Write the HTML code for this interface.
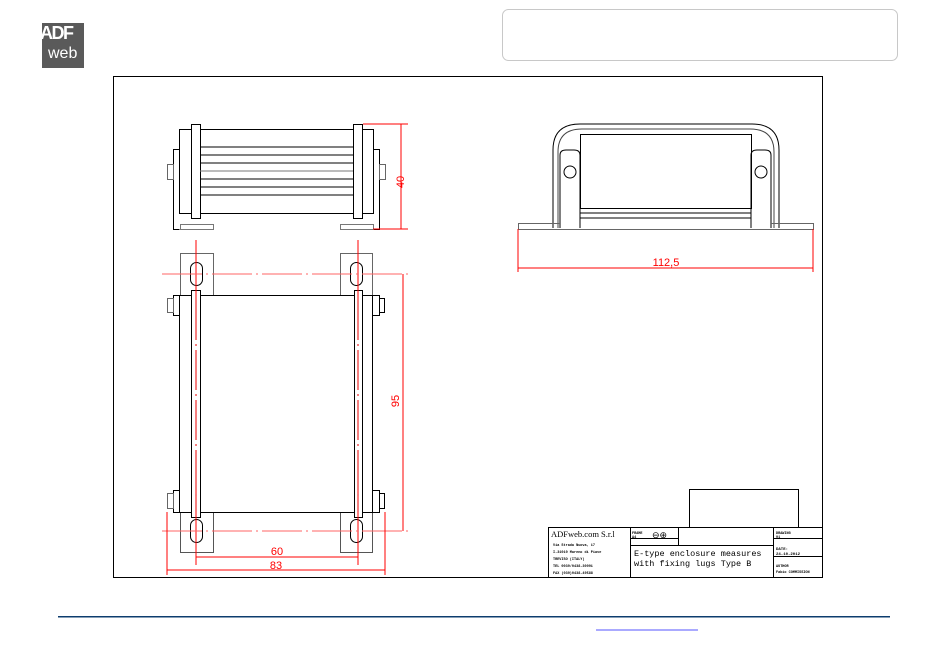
<!DOCTYPE html>
<html><head><meta charset="utf-8"><style>
html,body{margin:0;padding:0;background:#fff;width:950px;height:667px;overflow:hidden;font-family:"Liberation Sans",sans-serif}
</style></head><body>
<svg width="950" height="667" viewBox="0 0 950 667" xmlns="http://www.w3.org/2000/svg" style="position:absolute;left:0;top:0">
<!-- logo -->
<rect x="42" y="23" width="42" height="45" fill="#5a5a5a"/>
<text x="40" y="39" font-size="18" font-weight="700" fill="#fff" font-family="Liberation Sans" letter-spacing="-1.5">ADF</text>
<text x="48" y="58" font-size="16" fill="#fff" font-family="Liberation Sans">web</text>
<!-- header box -->
<rect x="502.5" y="9.5" width="395" height="51" rx="6" fill="#fff" stroke="#c8c8c8"/>
<!-- frame -->
<rect x="113.5" y="76.5" width="709" height="501" fill="none" stroke="#000"/>
<g fill="none" stroke="#000" stroke-width="1">
<rect x="179.5" y="129.5" width="194" height="84"/>
<rect x="191.5" y="124.5" width="9" height="94" fill="#fff"/>
<rect x="353.5" y="124.5" width="9" height="94" fill="#fff"/>
<path d="M200 147H353M200 155H353M200 163H353M200 179H353M200 187H353M200 195H353"/>
<path d="M200 171H353" stroke="#777"/>
<path d="M179.5 149.5H173.5V229.5H179.5M373.5 149.5H379.5V229.5H373.5"/>
<rect x="167.5" y="164.5" width="6" height="15" stroke="#666"/>
<rect x="379.5" y="164.5" width="6" height="15" stroke="#666"/>
<rect x="180.5" y="224.5" width="33" height="5" stroke="#777"/>
<rect x="340.5" y="224.5" width="33" height="5" stroke="#777"/>
<rect x="180.5" y="253.5" width="33" height="42" stroke="#666"/>
<rect x="340.5" y="253.5" width="32" height="42" stroke="#666"/>
<rect x="180.5" y="512.5" width="33" height="40" stroke="#555"/>
<rect x="340.5" y="512.5" width="32" height="40" stroke="#555"/>
<rect x="179.5" y="295.5" width="193" height="217" fill="#fff"/>
<rect x="191.5" y="290.5" width="9" height="227" fill="#fff"/>
<rect x="354.5" y="290.5" width="8" height="227" fill="#fff"/>
<rect x="173.5" y="295.5" width="6" height="20"/><rect x="167.5" y="298.5" width="6" height="14" stroke="#666"/>
<rect x="372.5" y="295.5" width="7" height="20"/><rect x="379.5" y="298.5" width="5" height="14"/>
<rect x="173.5" y="490.5" width="6" height="22"/><rect x="167.5" y="493.5" width="6" height="15" stroke="#666"/>
<rect x="372.5" y="490.5" width="7" height="22"/><rect x="379.5" y="493.5" width="5" height="15"/>
<rect x="190.5" y="262.5" width="12" height="23" rx="6"/>
<rect x="350.5" y="262.5" width="12" height="23" rx="6"/>
<rect x="190.5" y="519.5" width="12" height="23" rx="6"/>
<rect x="350.5" y="519.5" width="12" height="23" rx="6"/>
<path d="M553 228V150Q553 124 580 124H752Q779 124 779 150V228" />
<path d="M558 228V152Q558 129 582 129H750Q774 129 774 152V228" stroke="#444"/>
<rect x="580.5" y="134.5" width="171" height="74"/>
<path d="M580 213H751M580 218H751"/>
<path d="M560 228V155Q560 150 566 150H574Q580 150 580 155V228M751 228V155Q751 150 757 150H765Q771 150 771 155V228"/>
<path d="M518.5 229.5V223.5H560M771 223.5H813.5V229.5H518.5" stroke="#666"/>
<circle cx="570" cy="172" r="6"/><circle cx="761" cy="172" r="6"/>
</g>
<g stroke="#f00" fill="none" stroke-width="1">
<path d="M363 124H408M373 229H408M401 124V229"/>
<path d="M196 240V310M358 240V310M196 490V565M358 490V565" />
<path d="M162 274H410M162 531H410" stroke="#f66" stroke-dasharray="40 4 2 4"/>
<path d="M196 300V512M358 300V512" stroke="#e00" stroke-dasharray="40 4 2 4"/>
<path d="M403 274V531M196 557H358M167 512V575M385 512V575M167 570H385"/>
<path d="M518 229V272M813 229V272M518 268H813"/>
</g>
<g fill="#f00" font-family="Liberation Sans" font-size="11">
<text x="392" y="182" transform="rotate(-90 398 176)" text-anchor="middle">40</text>
<text x="400" y="404" transform="rotate(-90 398 403)" text-anchor="middle">95</text>
<text x="277" y="555" text-anchor="middle">60</text>
<text x="276" y="569" text-anchor="middle">83</text>
<text x="666" y="266" text-anchor="middle">112,5</text>
</g>
<g fill="none" stroke="#000">
<rect x="689.5" y="489.5" width="109" height="38"/>
<path d="M548.5 578V527.5H823M630.5 527.5V578M630.5 538.5H678.5M678.5 527.5V545.5M630.5 545.5H773.5M773.5 527.5V578M773.5 538.5H823M773.5 556.5H823"/>
</g>
<g font-family="Liberation Mono" fill="#000">
<text x="551" y="537" font-size="8.5" font-family="Liberation Serif">ADFweb.com S.r.l</text>
<text x="553" y="546" font-size="3.5" font-weight="bold">Via Strada Nuova, 17</text>
<text x="553" y="553" font-size="3.5" font-weight="bold">I-31010 Mareno di Piave</text>
<text x="553" y="560" font-size="3.5" font-weight="bold">TREVISO (ITALY)</text>
<text x="553" y="567" font-size="3.5" font-weight="bold">TEL 0039/0438-30991</text>
<text x="553" y="574" font-size="3.5" font-weight="bold">FAX (039)0438-49588</text>
<text x="632" y="534" font-size="3.5" font-weight="bold">FRAME</text>
<text x="632" y="538" font-size="3.5" font-weight="bold">A4</text>
<text x="652" y="538" font-size="9">⊖⊕</text>
<text x="634" y="556" font-size="8.5">E-type enclosure measures</text>
<text x="634" y="566" font-size="8.5">with fixing lugs Type B</text>
<text x="776" y="534" font-size="3.5" font-weight="bold">DRAWING</text>
<text x="776" y="538" font-size="3.5" font-weight="bold">01</text>
<text x="776" y="550" font-size="4" font-weight="bold">DATE:</text>
<text x="776" y="555" font-size="4" font-weight="bold">24-10-2012</text>
<text x="776" y="567" font-size="3.5" font-weight="bold">AUTHOR</text>
<text x="776" y="573" font-size="3.5" font-weight="bold">Fabio COMMISSION</text>
</g>
<rect x="58" y="616" width="832" height="1.5" fill="#0d3c6e"/>
<rect x="596" y="629" width="102" height="2" fill="#aaf"/>
</svg>
</body></html>
